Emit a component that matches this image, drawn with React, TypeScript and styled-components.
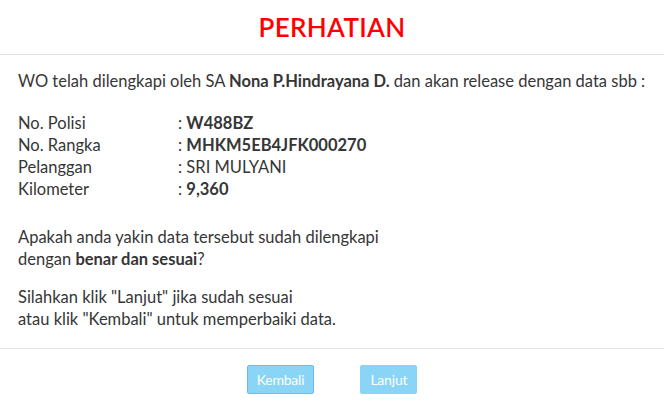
import styled, { createGlobalStyle } from "styled-components";

const GlobalStyle = createGlobalStyle`
  body {
    margin: 0;
    background: #fff;
    font-family: Lato, "Open Sans", sans-serif;
    color: #363636;
  }
`;

const Modal = styled.div`
  width: 664px;
  height: 406px;
  display: flex;
  flex-direction: column;
  background: #fff;
`;

const Header = styled.div`
  height: 54px;
  border-bottom: 1px solid #e2e2e2;
  display: flex;
  align-items: center;
  justify-content: center;
`;

const Title = styled.h2`
  margin: 0;
  color: #ff0000;
  font-size: 26px;
  font-weight: 600;
  letter-spacing: 0.3px;
`;

const Body = styled.div`
  padding: 15px 18px 0;
  font-size: 16.5px;
  line-height: 22px;
  height: 293px;
  box-sizing: border-box;
`;

const Text = styled.p<{ $gap?: number }>`
  margin: 0 0 ${(p) => p.$gap ?? 0}px;
`;

const DataList = styled.div`
  display: grid;
  grid-template-columns: 160px 1fr;
  margin-bottom: 26px;
`;

const Value = styled.span<{ $bold?: boolean }>`
  font-weight: ${(p) => (p.$bold ? 700 : 400)};
`;

const Footer = styled.div`
  border-top: 1px solid #e2e2e2;
  flex: 1;
  display: flex;
  justify-content: center;
  align-items: flex-start;
  gap: 46px;
  padding-top: 16px;
`;

const Button = styled.button<{ $focused?: boolean }>`
  height: 29px;
  padding: 0 9px;
  border: 1px solid ${(p) => (p.$focused ? "#6cbcf0" : "#8ad4f6")};
  border-radius: 2px;
  background: #8ad4f6;
  color: #fff;
  font-family: Lato, sans-serif;
  font-size: 14px;
  letter-spacing: -0.2px;
  cursor: pointer;
`;

const rows = [
  { label: "No. Polisi", value: "W488BZ", bold: true },
  { label: "No. Rangka", value: "MHKM5EB4JFK000270", bold: true },
  { label: "Pelanggan", value: "SRI MULYANI", bold: false },
  { label: "Kilometer", value: "9,360", bold: true },
];

export default function App() {
  return (
    <Modal>
      <GlobalStyle />
      <Header>
        <Title>PERHATIAN</Title>
      </Header>
      <Body>
        <Text $gap={20}>
          WO telah dilengkapi oleh SA <b>Nona P.Hindrayana D.</b> dan akan release dengan data sbb :
        </Text>
        <DataList>
          {rows.map((r) => (
            <>
              <span key={r.label}>{r.label}</span>
              <span>
                : <Value $bold={r.bold}>{r.value}</Value>
              </span>
            </>
          ))}
        </DataList>
        <Text $gap={16}>
          Apakah anda yakin data tersebut sudah dilengkapi
          <br />
          dengan <b>benar dan sesuai</b>?
        </Text>
        <Text>
          Silahkan klik "Lanjut" jika sudah sesuai
          <br />
          atau klik "Kembali" untuk memperbaiki data.
        </Text>
      </Body>
      <Footer>
        <Button $focused>Kembali</Button>
        <Button>Lanjut</Button>
      </Footer>
    </Modal>
  );
}
